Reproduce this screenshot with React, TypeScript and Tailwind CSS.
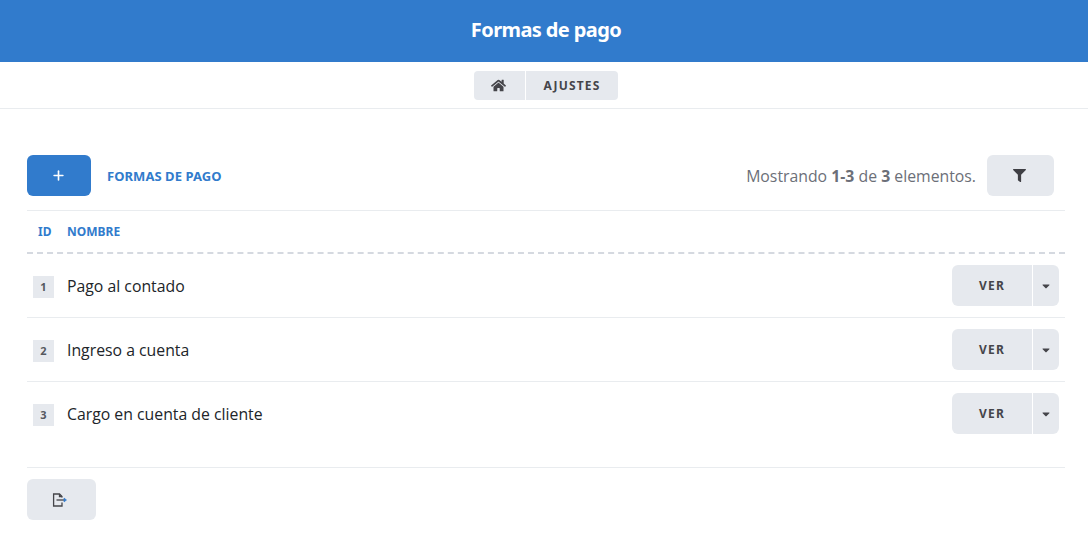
import React from 'react';
import { Plus } from 'lucide-react';
import { FaHome, FaFilter, FaCaretDown } from 'react-icons/fa';

const heading = 'font-["Noto_Sans",sans-serif]';

const rows = [
  { id: 1, name: 'Pago al contado' },
  { id: 2, name: 'Ingreso a cuenta' },
  { id: 3, name: 'Cargo en cuenta de cliente' },
];

const App: React.FC = () => {
  return (
    <div className='h-[541px] overflow-hidden bg-white font-["Open_Sans",sans-serif] text-[#212529]'>
      <header className="flex h-[62px] items-center justify-center bg-[#317bcc] pb-[2px] pl-[4px]">
        <h1 className={`${heading} text-[20px] font-bold tracking-[-0.6px] text-white`}>Formas de pago</h1>
      </header>

      <nav className="flex h-[47px] justify-center gap-px border-b border-[#e9ecef] pl-[4px] pt-[9px]">
        <div className="flex h-[29px] w-[51px] items-center justify-center rounded-l-[4px] bg-[#e6e9ee] pb-[1px] pr-[2px] text-[#45454a]">
          <FaHome className="h-[15px] w-[15px]" />
        </div>
        <div className={`${heading} flex h-[29px] w-[92px] items-center justify-center rounded-r-[4px] bg-[#e6e9ee] text-[12px] font-bold tracking-[1.2px] text-[#45454a]`}>
          AJUSTES
        </div>
      </nav>

      <main className="pl-[27px] pr-[23px] pt-[46px]">
        <div className="flex h-[56px] items-start border-b border-[#e9ecef]">
          <button className="flex h-[41px] w-[64px] items-center justify-center rounded-[6px] bg-[#317bcc] pr-[2px] text-white">
            <Plus className="h-[15px] w-[15px]" strokeWidth={2.6} />
          </button>
          <span className={`${heading} ml-[16px] mt-[12px] text-[13px] font-bold leading-[18px] tracking-[0.05px] text-[#317bcc]`}>FORMAS DE PAGO</span>
          <span className="ml-auto mt-[9px] text-[15.8px] leading-[24px] text-[#6c6f78]">
            Mostrando <b className="font-bold">1-3</b> de <b className="font-bold">3</b> elementos.
          </span>
          <button className="ml-[11px] mr-[11px] flex h-[41px] w-[67px] items-center justify-center rounded-[6px] bg-[#e6e9ee] pb-[1px] pr-[2px] text-[#3f3f44]">
            <FaFilter className="h-[13px] w-[13px]" />
          </button>
        </div>

        <div className={`${heading} flex h-[43px] items-center border-b-2 border-dashed border-[#d5d9e0] text-[12px] font-bold text-[#317bcc]`}>
          <span className="w-[40px] pl-[11px]">ID</span>
          <span>NOMBRE</span>
        </div>

        {rows.map((row, index) => (
          <div
            key={row.id}
            className={`flex h-[64px] items-center border-b ${index < rows.length - 1 ? 'border-[#e9ecef]' : 'border-transparent'}`}
          >
            <span className="ml-[6px] mt-[3px] flex h-[22px] w-[21px] items-center justify-center bg-[#e6e9ee] pt-[1px] text-[11px] font-bold text-[#55585f]">
              {row.id}
            </span>
            <span className="ml-[13px] text-[15.8px] leading-[24px] text-[#212529]">{row.name}</span>
            <div className="ml-auto mr-[6px] flex gap-px">
              <button className={`${heading} flex h-[41px] w-[80px] items-center justify-center rounded-l-[6px] bg-[#e6e9ee] text-[12px] font-bold tracking-[1.2px] text-[#45454a]`}>
                VER
              </button>
              <button className="flex h-[41px] w-[26px] items-center justify-center rounded-r-[6px] bg-[#e6e9ee] text-[#45454a]">
                <FaCaretDown className="h-[12px] w-[12px]" />
              </button>
            </div>
          </div>
        ))}

        <div className="mt-[21px] border-t border-[#e9ecef] pt-[11px]">
          <button className="flex h-[41px] w-[69px] items-center justify-center rounded-[6px] bg-[#e6e9ee] pr-[3px]">
            <svg width="16" height="14" viewBox="0 0 16 14" fill="none" stroke="#45454a" strokeWidth="1.3">
              <path d="M10 4.5V3.5L7.5 1H1.6v12H10V9.5" />
              <path d="M7.5 1v2.5H10" />
              <path d="M4.5 7h8" />
              <path d="M12 5l2.5 2-2.5 2z" fill="#317bcc" stroke="#317bcc" strokeWidth="0.6" />
            </svg>
          </button>
        </div>
      </main>
    </div>
  );
};

export default App;
